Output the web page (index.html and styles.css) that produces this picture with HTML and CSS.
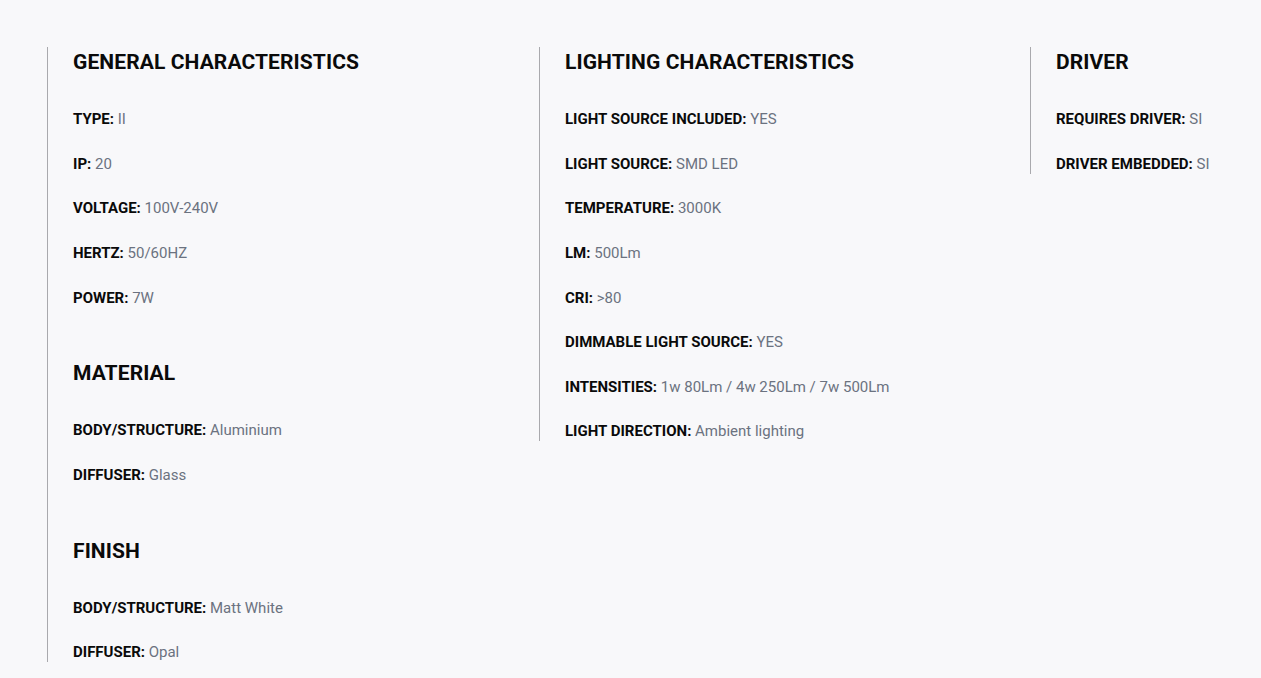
FILE: index.html
```html
<!DOCTYPE html>
<html lang="en">
<head>
<meta charset="utf-8">
<title>Specifications</title>
<link rel="stylesheet" href="styles.css">
</head>
<body>
<div class="specs">
  <div class="col">
    <section class="group">
      <h2 class="title">GENERAL CHARACTERISTICS</h2>
      <ul class="list">
        <li><b>TYPE:</b> II</li>
        <li><b>IP:</b> 20</li>
        <li><b>VOLTAGE:</b> 100V-240V</li>
        <li><b>HERTZ:</b> 50/60HZ</li>
        <li><b>POWER:</b> 7W</li>
      </ul>
    </section>
    <section class="group">
      <h2 class="title">MATERIAL</h2>
      <ul class="list">
        <li><b>BODY/STRUCTURE:</b> Aluminium</li>
        <li><b>DIFFUSER:</b> Glass</li>
      </ul>
    </section>
    <section class="group">
      <h2 class="title">FINISH</h2>
      <ul class="list">
        <li><b>BODY/STRUCTURE:</b> Matt White</li>
        <li><b>DIFFUSER:</b> Opal</li>
      </ul>
    </section>
  </div>
  <div class="col">
    <section class="group">
      <h2 class="title">LIGHTING CHARACTERISTICS</h2>
      <ul class="list">
        <li><b>LIGHT SOURCE INCLUDED:</b> YES</li>
        <li><b>LIGHT SOURCE:</b> SMD LED</li>
        <li><b>TEMPERATURE:</b> 3000K</li>
        <li><b>LM:</b> 500Lm</li>
        <li><b>CRI:</b> &gt;80</li>
        <li><b>DIMMABLE LIGHT SOURCE:</b> YES</li>
        <li><b>INTENSITIES:</b> 1w 80Lm / 4w 250Lm / 7w 500Lm</li>
        <li><b>LIGHT DIRECTION:</b> Ambient lighting</li>
      </ul>
    </section>
  </div>
  <div class="col col-last">
    <section class="group">
      <h2 class="title">DRIVER</h2>
      <ul class="list">
        <li><b>REQUIRES DRIVER:</b> SI</li>
        <li><b>DRIVER EMBEDDED:</b> SI</li>
      </ul>
    </section>
  </div>
</div>
</body>
</html>
```
FILE: styles.css
```css
html, body {
  margin: 0;
  padding: 0;
  background: #f8f8fa;
  overflow: hidden;
}
body {
  font-family: Roboto, "Liberation Sans", Arial, sans-serif;
  color: #111;
}
.specs {
  display: flex;
  align-items: flex-start;
  padding: 48px 0 0 47px;
}
.col {
  flex: 0 0 492px;
  box-sizing: border-box;
  border-left: 1px solid #a9a9ad;
  margin-top: -1px;
  padding-left: 25px;
  padding-top: 1px;
  display: flex;
  flex-direction: column;
  gap: 51.5px;
}
.col + .col { flex-basis: 491px; }
.col-last { flex: 1 1 auto; min-width: 0; }
.title {
  margin: 0 0 33.3px;
  font-size: 21px;
  line-height: 28px;
  font-weight: 700;
  color: #0a0a0a;
  letter-spacing: 0.1px;
}
.list {
  list-style: none;
  margin: 0;
  padding: 0;
  display: flex;
  flex-direction: column;
  gap: 24.6px;
}
.list li {
  font-size: 15px;
  line-height: 20px;
  color: #6b7280;
  white-space: nowrap;
}
.list b {
  font-weight: 700;
  color: #0a0a0a;
}
```
